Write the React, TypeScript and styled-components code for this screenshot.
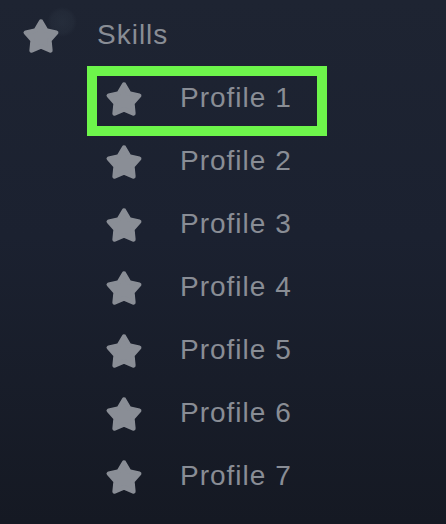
import { FC } from "react";
import styled, { createGlobalStyle } from "styled-components";

const GlobalStyle = createGlobalStyle`
  html, body {
    margin: 0;
    padding: 0;
    height: 100%;
  }
  body {
    background:
      radial-gradient(circle at 62px 22px, rgba(55, 66, 80, 0.3) 0, rgba(55, 66, 80, 0.18) 11px, rgba(55, 66, 80, 0) 15px),
      linear-gradient(180deg, #1e2432 0%, #1b2130 45%, #151923 100%);
    font-family: "Liberation Sans", Arial, sans-serif;
  }
`;

const Menu = styled.div`
  width: 446px;
  height: 524px;
  box-sizing: border-box;
  padding-top: 4px;
  display: flex;
  flex-direction: column;
`;

const Row = styled.div<{ $indent: number; $selected?: boolean }>`
  position: relative;
  height: 63px;
  width: 220px;
  margin-left: ${(p) => p.$indent}px;
  padding-left: 7px;
  display: flex;
  align-items: center;
  gap: 36px;
  box-sizing: border-box;

  ${(p) =>
    p.$selected &&
    `
    &::after {
      content: "";
      position: absolute;
      top: -1px;
      bottom: -6px;
      left: -10px;
      right: -10px;
      border: 10px solid #6df54b;
      pointer-events: none;
    }
  `}
`;

const Label = styled.span<{ $size: number }>`
  font-size: ${(p) => p.$size}px;
  letter-spacing: 1px;
  color: #898d95;
  white-space: nowrap;
  line-height: 1;
  margin-top: -2px;
`;

const starPoints = (() => {
  const cx = 20;
  const R = 16;
  const r = 8.8;
  const cy = 20 + (R - R * Math.cos(Math.PI / 5)) / 2;
  const pts: string[] = [];
  for (let i = 0; i < 10; i++) {
    const rad = i % 2 === 0 ? R : r;
    const a = -Math.PI / 2 + (i * Math.PI) / 5;
    pts.push(`${(cx + rad * Math.cos(a)).toFixed(2)},${(cy + rad * Math.sin(a)).toFixed(2)}`);
  }
  return pts.join(" ");
})();

const StarIcon: FC = () => (
  <svg width="40" height="40" viewBox="0 0 40 40" style={{ flex: "none" }}>
    <polygon
      points={starPoints}
      fill="#8a8e96"
      stroke="#8a8e96"
      strokeWidth="4.5"
      strokeLinejoin="round"
    />
  </svg>
);

const profiles = [1, 2, 3, 4, 5, 6, 7];

const App: FC = () => {
  return (
    <>
      <GlobalStyle />
      <Menu>
        <Row $indent={14}>
          <StarIcon />
          <Label $size={28}>Skills</Label>
        </Row>
        {profiles.map((n) => (
          <Row key={n} $indent={97} $selected={n === 1}>
            <StarIcon />
            <Label $size={28}>Profile {n}</Label>
          </Row>
        ))}
      </Menu>
    </>
  );
};

export default App;
